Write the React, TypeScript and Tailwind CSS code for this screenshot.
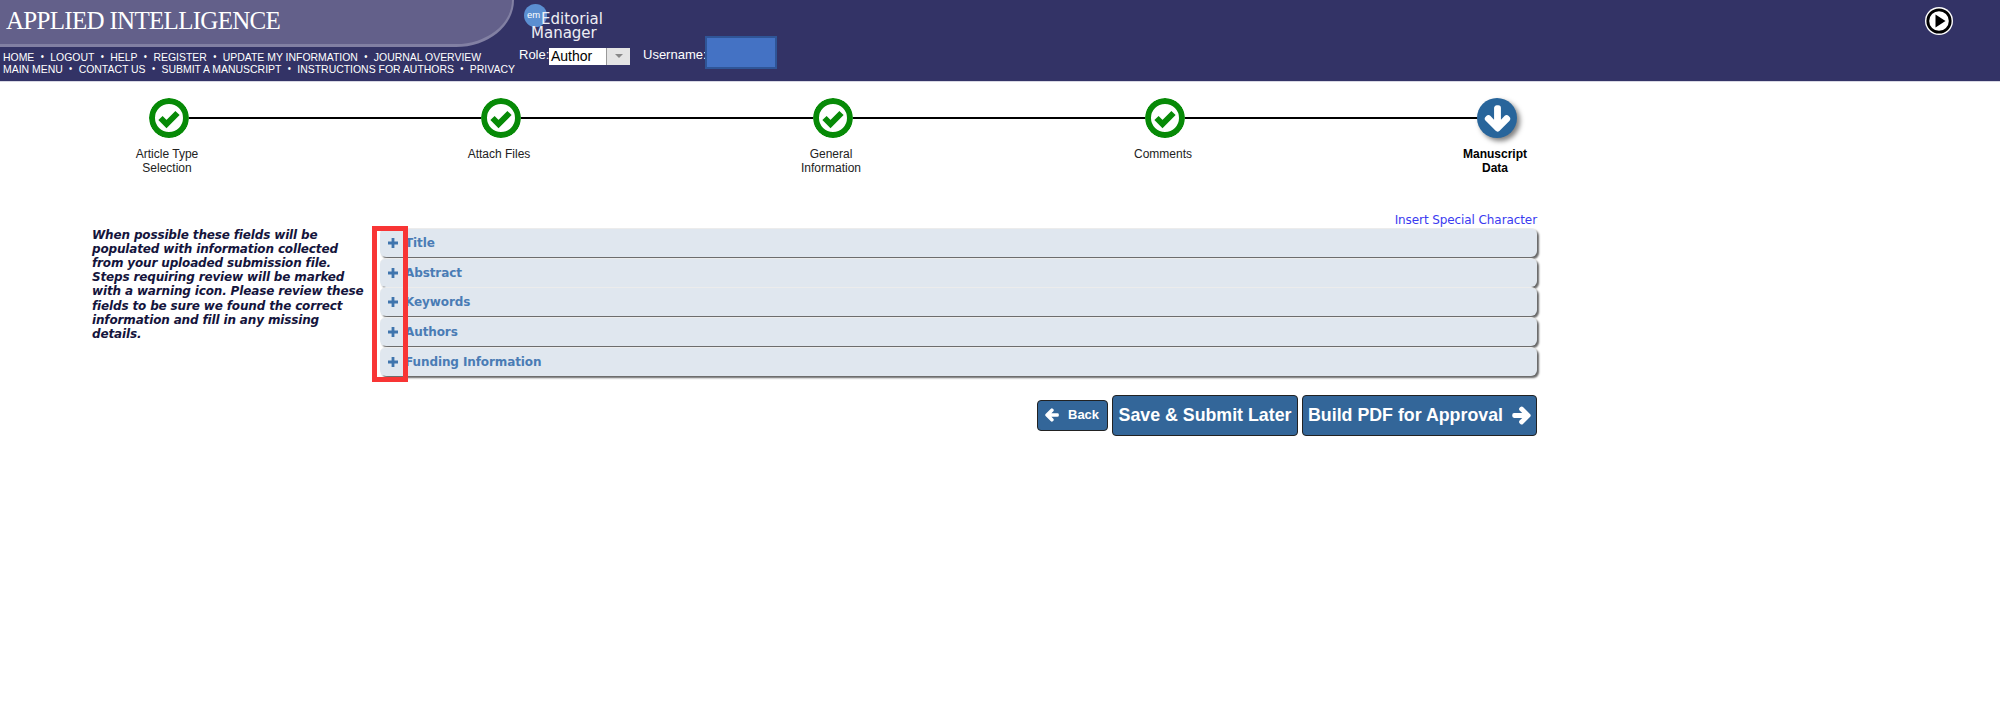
import React from 'react';
import { FaArrowDown, FaArrowLeft, FaArrowRight } from 'react-icons/fa';

const NAV_TOP = ['HOME', 'LOGOUT', 'HELP', 'REGISTER', 'UPDATE MY INFORMATION', 'JOURNAL OVERVIEW'];
const NAV_BOTTOM = ['MAIN MENU', 'CONTACT US', 'SUBMIT A MANUSCRIPT', 'INSTRUCTIONS FOR AUTHORS', 'PRIVACY'];
const STEPS = [
  { label: ['Article Type', 'Selection'], done: true },
  { label: ['Attach Files'], done: true },
  { label: ['General', 'Information'], done: true },
  { label: ['Comments'], done: true },
  { label: ['Manuscript', 'Data'], done: false },
];
const SECTIONS = ['Title', 'Abstract', 'Keywords', 'Authors', 'Funding Information'];

const NavLine = ({ items }: { items: string[] }) => (
  <div className="flex h-[12px] origin-left scale-x-[0.908] items-center whitespace-nowrap text-[11.5px] leading-[12px] text-white">
    {items.map((item, i) => (
      <React.Fragment key={item}>
        {i > 0 && <span className="mx-[7px] text-[10px]">•</span>}
        <span>{item}</span>
      </React.Fragment>
    ))}
  </div>
);

const CheckIcon = () => (
  <svg width="40" height="40" viewBox="0 0 40 40" className="rounded-full bg-white">
    <circle cx="20" cy="20" r="17" fill="#fff" stroke="#078a07" strokeWidth="6" />
    <path d="M11.5 20l6 6L28.5 15" fill="none" stroke="#078a07" strokeWidth="6" />
  </svg>
);

export default function App() {
  return (
    <div className="min-h-[703px] bg-white font-['Liberation_Sans',sans-serif]">
      <header className="flex h-[82px] border-b border-[#d8d8e4] bg-[#333366]">
        <div className="w-[516px] shrink-0">
          <div className="h-[47px] w-[514px] rounded-br-[58px_47px] border-r-[2px] border-b-[3px] border-[#8280a3] bg-[#63608a] pl-[6px] pt-[6px] font-['Liberation_Serif',serif] text-[25px] leading-[30px] tracking-[-0.7px] text-white">
            APPLIED INTELLIGENCE
          </div>
          <div className="pl-[3px] pt-[3.5px]">
            <NavLine items={NAV_TOP} />
            <NavLine items={NAV_BOTTOM} />
          </div>
        </div>
        <div className="flex flex-col pl-[3px]">
          <div className="relative h-[43px] w-[90px]">
            <div className="absolute left-[5px] top-[4px] flex h-[23px] w-[23px] items-center rounded-full bg-[#5b8fd1] pl-[3px] pb-[2px] text-[9.5px] leading-none text-white">
              em
            </div>
            <div className="absolute left-[22px] top-[12px] font-['DejaVu_Sans',sans-serif] text-[15px] leading-[15px] text-[#eeeef4]">
              Editorial
            </div>
            <div className="absolute left-[12px] top-[26px] font-['DejaVu_Sans',sans-serif] text-[15px] leading-[15px] text-[#eeeef4]">
              Manager
            </div>
          </div>
          <div className="flex items-center text-[13px] text-white">
            <span className="-mt-[3px] w-[30px]">Role:</span>
            <div className="flex h-[17px] w-[81px] items-center bg-white text-[14px] leading-none text-black">
              <span className="flex-1 pl-[2px]">Author</span>
              <span className="flex h-full w-[24px] items-center justify-center border-l border-[#999] bg-[#e4e4e4]">
                <span className="h-0 w-0 border-x-[4px] border-t-[4px] border-x-transparent border-t-[#888]" />
              </span>
            </div>
            <span className="-mt-[3px] ml-[13px] w-[62px]">Username:</span>
            <div className="-mt-[7px] h-[33px] w-[72px] border-[2px] border-[#2f5597] bg-[#4472c4]" />
          </div>
        </div>
        <div className="ml-auto pr-[47px] pt-[7px]">
          <svg width="28" height="28" viewBox="0 0 28 28">
            <circle cx="14" cy="14" r="14" fill="#fff" />
            <circle cx="14" cy="14" r="11.2" fill="#fff" stroke="#000" strokeWidth="2.8" />
            <path d="M10.5 7.5L20.5 14l-10 6.5z" fill="#000" />
          </svg>
        </div>
      </header>

      <div className="relative ml-[109px] mt-[16px] flex w-[1448px] justify-between">
        <div className="absolute left-[60px] right-[60px] top-[19px] h-[2px] bg-black" />
        {STEPS.map(step => (
          <div key={step.label[0]} className="relative flex w-[120px] flex-col items-center text-center text-[12px] leading-[14px] text-[#222]">
            {step.done ? (
              <CheckIcon />
            ) : (
              <div className="flex h-[40px] w-[40px] items-center justify-center rounded-full bg-[#28659b] text-[27px] text-white shadow-[3px_3px_5px_rgba(0,0,0,0.5)]">
                <FaArrowDown stroke="currentColor" strokeWidth={50} />
              </div>
            )}
            <div className={`mt-[9px] -translate-x-[2px] ${step.done ? '' : 'font-bold text-black'}`}>
              {step.label.map(line => <div key={line}>{line}</div>)}
            </div>
          </div>
        ))}
      </div>

      <div className="ml-[92px] mt-[38px] flex">
        <p className="mt-[14.5px] w-[288px] shrink-0 font-['DejaVu_Sans',sans-serif] text-[12px] font-bold italic leading-[14.2px] tracking-[-0.15px] text-[#14143c]">
          When possible these fields will be<br />
          populated with information collected<br />
          from your uploaded submission file.<br />
          Steps requiring review will be marked<br />
          with a warning icon. Please review these<br />
          fields to be sure we found the correct<br />
          information and fill in any missing<br />
          details.
        </p>
        <div className="w-[1157px] shrink-0">
          <div className="h-[15px] text-right font-['DejaVu_Sans',sans-serif] text-[12px] leading-[15px] tracking-[-0.09px] text-[#3a3af0]">
            Insert Special Character
          </div>
          <div className="relative">
            {SECTIONS.map(name => (
              <div key={name} className="mb-[0.67px] flex h-[29px] items-center rounded-[6px] border-t border-[#ececec] bg-[#e0e7ef] font-['DejaVu_Sans',sans-serif] text-[12px] font-bold tracking-[-0.1px] text-[#4a7cb5] shadow-[2px_2px_2px_#666]">
                <svg width="10" height="10" viewBox="0 0 10 10" className="ml-[8px] mr-[7px]">
                  <path d="M3.6 0h2.8v3.6H10v2.8H6.4V10H3.6V6.4H0V3.6h3.6z" fill="#3f74ad" />
                </svg>
                {name}
              </div>
            ))}
            <div className="absolute -left-[8px] -top-[2px] h-[156px] w-[36px] border-[5px] border-[#f83535]" />
          </div>
          <div className="mt-[19px] flex items-center justify-end gap-[4px] font-bold text-white">
            <button className="flex h-[31px] w-[71px] items-center gap-[9px] rounded-[4px] border border-[#222] bg-[#336699] pl-[7px] text-[13px]">
              <FaArrowLeft className="text-[14px]" stroke="currentColor" strokeWidth={50} />
              Back
            </button>
            <button className="h-[41px] w-[186px] rounded-[4px] border border-[#222] bg-[#336699] text-[17.8px]">
              Save &amp; Submit Later
            </button>
            <button className="flex h-[41px] w-[235px] items-center justify-center gap-[9px] rounded-[4px] border border-[#222] bg-[#336699] text-[17.8px]">
              Build PDF for Approval
              <FaArrowRight className="text-[19px]" stroke="currentColor" strokeWidth={50} />
            </button>
          </div>
        </div>
      </div>
    </div>
  );
}
